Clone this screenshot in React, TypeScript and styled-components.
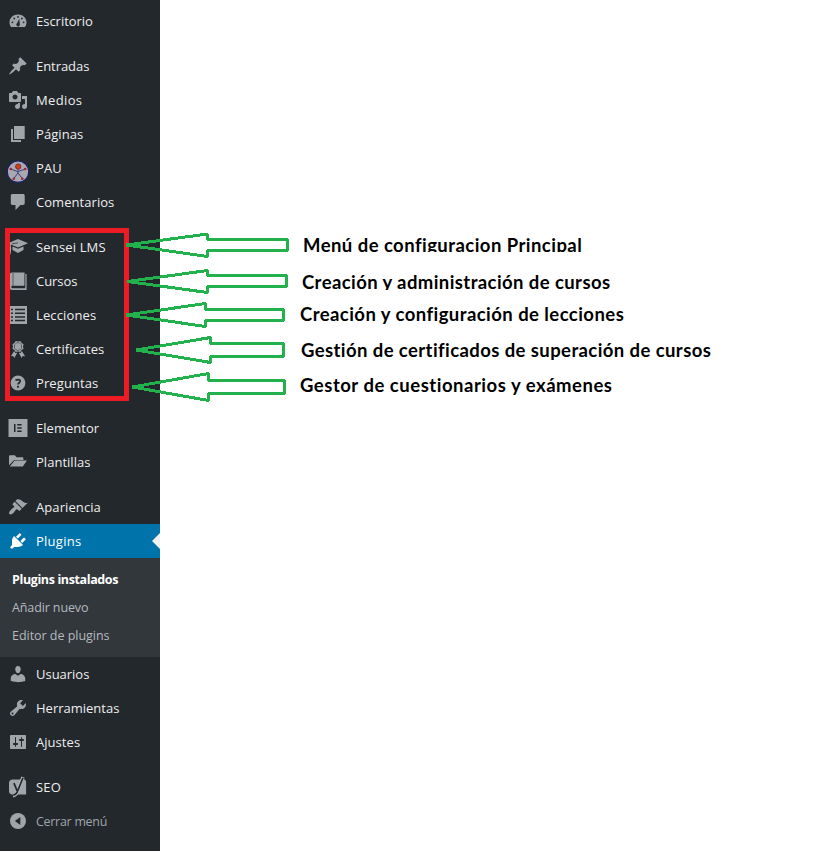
import React from "react";
import styled, { createGlobalStyle, css } from "styled-components";

const GlobalStyle = createGlobalStyle`
  body {
    margin: 0;
    background: #fff;
  }
`;

const Page = styled.div`
  position: relative;
  display: flex;
  align-items: flex-start;
  width: 818px;
  height: 868px;
  overflow: hidden;
  font-family: "Open Sans", "Noto Sans", sans-serif;
`;

const Sidebar = styled.nav`
  display: flex;
  flex-direction: column;
  gap: 11px;
  box-sizing: border-box;
  width: 160px;
  height: 851px;
  padding-top: 4px;
  background: #23282d;
`;

const MenuGroup = styled.div`
  display: flex;
  flex-direction: column;
`;

const MenuRow = styled.a<{ $active?: boolean; $muted?: boolean }>`
  position: relative;
  display: flex;
  align-items: center;
  gap: 8px;
  height: 34px;
  padding-left: 8px;
  color: #eee;
  font-size: 13px;
  line-height: 18px;
  white-space: nowrap;

  ${(p) =>
    p.$muted &&
    css`
      color: #a0a5aa;
      font-size: 12.4px;
      line-height: 20px;

      span {
        padding-top: 2px;
      }
    `}

  ${(p) =>
    p.$active &&
    css`
      background: #0073aa;
      color: #fff;

      &::after {
        content: "";
        position: absolute;
        right: 0;
        top: 9px;
        border: 8px solid transparent;
        border-left-width: 0;
        border-right-color: #f1f1f1;
      }
    `}
`;

const IconBox = styled.svg<{ $active?: boolean }>`
  flex: none;
  width: 20px;
  height: 20px;
  overflow: visible;
  fill: ${(p) => (p.$active ? "#fff" : "#a0a5aa")};
`;

const Label = styled.span<{ $spacing: number }>`
  letter-spacing: ${(p) => p.$spacing}px;
`;

const Submenu = styled.div`
  display: flex;
  flex-direction: column;
  box-sizing: border-box;
  height: 99px;
  padding: 8px 12px 7px;
  background: #32373c;
`;

const SubmenuItem = styled.a<{ $current?: boolean }>`
  height: 28px;
  color: ${(p) => (p.$current ? "#fff" : "#b4b9be")};
  font-size: 12.5px;
  font-weight: ${(p) => (p.$current ? 700 : 400)};
  line-height: 28px;
  white-space: nowrap;
`;

const Annotations = styled.div`
  position: absolute;
  inset: 0;
  pointer-events: none;
`;

const Highlight = styled.div`
  position: absolute;
  left: 5px;
  top: 228px;
  box-sizing: border-box;
  width: 124px;
  height: 173px;
  border: 5px solid #ed1c24;
`;

const Arrows = styled.svg`
  position: absolute;
  left: 0;
  top: 0;
  fill: none;
  stroke: #22b14c;
  stroke-width: 3;
  shape-rendering: crispEdges;
`;

const Note = styled.div<{ $x: number; $y: number; $h: number; $spacing: number }>`
  position: absolute;
  left: ${(p) => p.$x}px;
  top: ${(p) => p.$y}px;
  height: ${(p) => p.$h}px;
  overflow: hidden;
  color: #000;
  font: 700 18.5px/24px Lato, "Open Sans", sans-serif;
  letter-spacing: ${(p) => p.$spacing}px;
  white-space: nowrap;
`;

const bg = "#23282d";

const icons: Record<string, React.ReactNode> = {
  dashboard: (
    <g transform="translate(0 -.5)">
      <path d="M3.200 16.600h13.600c1-1.300 1.700-2.900 1.700-4.700C18.500 7.300 14.700 4 10 4S1.500 7.300 1.500 11.900c0 1.800.7 3.400 1.700 4.700z" />
      <g fill={bg}>
        <circle cx="10" cy="6.400" r=".9" />
        <circle cx="6.200" cy="8" r=".9" />
        <circle cx="4.400" cy="11.800" r=".9" />
        <circle cx="15.600" cy="11.800" r=".9" />
        <circle cx="13.900" cy="8" r=".9" />
        <path d="M11.200 8.300l.6 5a1.800 1.800 0 1 1-2.600-.8z" />
      </g>
    </g>
  ),
  pin: (
    <path d="M10.440 3.020l1.820-1.820 6.360 6.350-1.830 1.820c-1.050-.68-2.480-.57-3.410.36l-.75.75c-.92.93-1.040 2.350-.35 3.410l-1.830 1.820-2.410-2.410-2.800 2.790c-.42.42-3.380 2.710-3.800 2.290s1.860-3.390 2.280-3.810l2.790-2.790L4.100 9.360l1.830-1.820c1.050.69 2.480.57 3.400-.36l.75-.75c.93-.92 1.050-2.350.36-3.410z" />
  ),
  media: (
    <path
      fillRule="evenodd"
      d="M13 11V4c0-.55-.45-1-1-1h-1.670L9 1H5L3.670 3H2c-.55 0-1 .45-1 1v7c0 .55.45 1 1 1h10c.55 0 1-.45 1-1zM7 4.500c1.380 0 2.500 1.120 2.500 2.500S8.380 9.500 7 9.500 4.500 8.380 4.500 7 5.620 4.500 7 4.500zM14 6h5v10.500c0 1.380-1.120 2.500-2.500 2.500S14 17.880 14 16.500s1.120-2.500 2.500-2.500c.17 0 .34.02.5.05V9h-3V6zm-4 8.050V13h2v3.500c0 1.380-1.120 2.500-2.500 2.500S7 17.880 7 16.500 8.120 14 9.500 14c.17 0 .34.02.5.05z"
    />
  ),
  page: <path d="M6 15V2h10.700v13H6zm-1 1h8v2H3V5h2v11z" />,
  pau: (
    <g transform="translate(0 3.700)">
      <circle cx="10" cy="10" r="10.700" fill="#a8a9b0" stroke="#19206b" strokeWidth="1.100" />
      <path d="M2.800 7.400l7 2.500 7.400-2.500M10 8v3.200l-4.200 5.600M10 11.200l4.300 5.600" fill="none" stroke="#39407f" strokeWidth="1" />
      <circle cx="10.200" cy="4.900" r="2.700" fill="#d33a12" stroke="#6b2442" strokeWidth=".8" />
      <g fill="#a02338">
        <circle cx="2.800" cy="7.300" r="1.300" />
        <circle cx="17.200" cy="7.300" r="1.300" />
        <circle cx="5.800" cy="17" r="1.300" />
        <circle cx="14.300" cy="17" r="1.300" />
      </g>
    </g>
  ),
  comment: <path d="M4.500 2h10.500c1 0 1.700.7 1.700 1.700v7.600c0 1-.7 1.700-1.700 1.700h-2.500l-5 5v-5h-3c-1 0-1.700-.7-1.700-1.700V3.700c0-1 .7-1.700 1.700-1.700z" />,
  sensei: (
    <>
      <path d="M10 2l10 4.200-10 4.300-7.200-3V9.200c.8 1.800.2 5.800-.6 8.800H.6c.3-3.400.5-7.800.9-9.600L.6 6z" />
      <path d="M4.500 9.600l5.500 2.200 5.500-2.200v3.500l-5.500 2.900-5.500-2.900z" />
      <path d="M10 5.800l-6 1" stroke={bg} strokeWidth=".7" fill="none" />
    </>
  ),
  book: (
    <>
      <path d="M4 1.500h12.600v13.300H4.500a1.200 1.200 0 0 0 0 2.400h12.600V3h1.500v16H4.500A3.200 3.200 0 0 1 1.300 16V4.200c0-1.700 1.200-2.700 2.700-2.700z" />
      <path d="M5 2v12.800" stroke={bg} strokeWidth=".6" />
      <path d="M17 3v13.500" stroke={bg} strokeWidth=".5" />
    </>
  ),
  list: (
    <>
      <path d="M1 1h18v18H1z" />
      <path
        d="M3 4.500h2m2 0h10M3 8.200h2m2 0h10M3 11.900h2m2 0h10M3 15.600h2m2 0h10"
        stroke={bg}
        strokeWidth="1.500"
      />
    </>
  ),
  award: (
    <path
      fillRule="evenodd"
      d="M4.460 5.160L5 7.460l-.54 2.290 2.010 1.240L7.700 13l2.300-.54 2.300.54 1.230-2.010 2.010-1.240L15 7.460l.54-2.300-2-1.240-1.240-2.010-2.300.55-2.290-.54-1.250 2zm5.550 6.340c-2.210 0-4-1.790-4-4 0-2.200 1.790-4 4-4s4 1.800 4 4c0 2.210-1.790 4-4 4zm0-.6a3.400 3.400 0 1 0 0-6.800 3.400 3.400 0 0 0 0 6.800zM13.900 11.900l3.200 5.300-2.300-.2-1.100 2-3-5.300 1.900.4zM6.100 11.900l-3.200 5.300 2.300-.2 1.100 2 3-5.300-1.900.4z"
    />
  ),
  help: (
    <>
      <circle cx="10" cy="10" r="7.400" />
      <path d="M7.500 7.400c1-1 4.700-1.500 4.700.7 0 1.600-2.200 1.700-2.200 3.500" fill="none" stroke={bg} strokeWidth="1.700" />
      <circle cx="10" cy="13.800" r="1.100" fill={bg} />
    </>
  ),
  elementor: (
    <>
      <path d="M.5 1h19v18H.5z" />
      <path d="M6 6h1.500v8H6zM9.200 6h4.400v1.400H9.200zM9.200 9.300h4.400v1.400H9.200zM9.200 12.600h4.400V14H9.200z" fill={bg} />
    </>
  ),
  folder: (
    <path d="M1 13.200V4.500c0-.7.500-1.200 1.200-1.200h4.600l1.800 1.900h5.600c.7 0 1.200.5 1.200 1.100v1.700H6.200zM6.700 8.600h12.300l-4.200 6H1.800z" />
  ),
  appearance: (
    <path d="M14.480 11.060L7.410 3.990l1.500-1.500c.5-.56 2.300-.47 3.510.32 1.210.8 1.430 1.280 2.910 2.100 1.180.64 2.450 1.260 4.450.85zm-.71.710L6.700 4.700 4.930 6.470c-.39.39-.39 1.020 0 1.410l1.060 1.060c.39.39.39 1.030 0 1.420-.6.6-1.430 1.110-2.210 1.690-.35.26-.7.53-1.010.84C1.430 14.230.4 16.080 1.400 17.070c.99 1 2.840-.03 4.180-1.360.31-.31.58-.66.85-1.020.57-.78 1.080-1.610 1.690-2.210.39-.39 1.020-.39 1.410 0l1.060 1.060c.39.39 1.020.39 1.410 0z" />
  ),
  plugin: (
    <path d="M13.110 4.360L9.870 7.600 8 5.730l3.240-3.240c.35-.34 1.050-.2 1.560.32.52.51.66 1.210.31 1.550zm-8 1.770l.91-1.120 9.010 9.010-1.190.84c-.71.71-2.630 1.160-3.820 1.160H6.140L4.900 17.260c-.59.59-1.540.59-2.120 0-.59-.58-.59-1.530 0-2.120l1.240-1.240v-3.880c0-1.130.4-3.190 1.090-3.890zm7.260 3.970l3.240-3.240c.34-.35 1.040-.21 1.550.31.52.51.66 1.210.31 1.550l-3.240 3.250z" />
  ),
  user: (
    <path d="M10 9.250c-2.270 0-2.730-3.440-2.730-3.440C7 4.020 7.820 2 9.970 2c2.160 0 2.980 2.020 2.710 3.810 0 0-.41 3.440-2.680 3.440zm0 2.570L12.720 10c2.390 0 4.520 2.330 4.520 4.530v2.490s-3.650 1.130-7.240 1.130c-3.650 0-7.240-1.130-7.240-1.130v-2.490c0-2.250 1.940-4.480 4.470-4.480z" />
  ),
  tools: (
    <path d="M16.680 9.770c-1.340 1.340-3.300 1.670-4.950.99l-5.410 6.520c-.99.99-2.590.99-3.580 0s-.99-2.590 0-3.570l6.520-5.420c-.68-1.650-.35-3.610.99-4.950 1.280-1.280 3.120-1.620 4.720-1.060l-2.890 2.890 2.820 2.820 2.860-2.870c.53 1.580.18 3.390-1.080 4.650zM3.810 16.210c.4.39 1.040.39 1.430 0 .4-.4.4-1.040 0-1.430-.39-.4-1.030-.4-1.430 0-.39.39-.39 1.030 0 1.430z" />
  ),
  settings: (
    <path d="M18 16V4c0-.55-.45-1-1-1H3c-.55 0-1 .45-1 1v12c0 .55.45 1 1 1h14c.55 0 1-.45 1-1zM8 11h1c.55 0 1 .45 1 1s-.45 1-1 1H8v1.500c0 .28-.22.5-.5.5s-.5-.22-.5-.5V13H6c-.55 0-1-.45-1-1s.45-1 1-1h1V5.500c0-.28.22-.5.5-.5s.5.22.5.5V11zm5-2h-1c-.55 0-1-.45-1-1s.45-1 1-1h1V5.500c0-.28.22-.5.5-.5s.5.22.5.5V7h1c.55 0 1 .45 1 1s-.45 1-1 1h-1v5.500c0 .28-.22.5-.5.5s-.5-.22-.5-.5V9z" />
  ),
  seo: (
    <>
      <path d="M4.500 2.500h12c1 .5 1.600 1.500 1.600 2.700v12.300H4.200C2.300 17.500 1 16.200 1 14.300V6c0-2 1.500-3.500 3.500-3.500z" />
      <path d="M15 .2L9.800 13.600c-.8 2.700-2 4.900-4.800 5.100" fill="none" stroke="#b4b9be" strokeWidth="3.400" />
      <path d="M5.900 6.200l3.300 7.600M15 .8L9.800 13.600c-.8 2.500-2 4.300-4.600 4.500" fill="none" stroke={bg} strokeWidth="1.700" />
    </>
  ),
  collapse: (
    <>
      <circle cx="10" cy="10" r="8" />
      <path d="M12.300 6v8L6.800 10z" fill={bg} />
    </>
  ),
};

type Item = { icon: string; text: string; spacing: number; active?: boolean; muted?: boolean };

const groups: Item[][] = [
  [{ icon: "dashboard", text: "Escritorio", spacing: -0.02 }],
  [
    { icon: "pin", text: "Entradas", spacing: -0.05 },
    { icon: "media", text: "Medios", spacing: 0.35 },
    { icon: "page", text: "Páginas", spacing: 0.08 },
    { icon: "pau", text: "PAU", spacing: 0.1 },
    { icon: "comment", text: "Comentarios", spacing: 0.05 },
  ],
  [
    { icon: "sensei", text: "Sensei LMS", spacing: 0.16 },
    { icon: "book", text: "Cursos", spacing: -0.05 },
    { icon: "list", text: "Lecciones", spacing: 0.13 },
    { icon: "award", text: "Certificates", spacing: 0.02 },
    { icon: "help", text: "Preguntas", spacing: 0.1 },
  ],
  [
    { icon: "elementor", text: "Elementor", spacing: 0.03 },
    { icon: "folder", text: "Plantillas", spacing: 0.02 },
  ],
  [
    { icon: "appearance", text: "Apariencia", spacing: 0.09 },
    { icon: "plugin", text: "Plugins", spacing: 0.25, active: true },
    { icon: "user", text: "Usuarios", spacing: -0.02 },
    { icon: "tools", text: "Herramientas", spacing: 0 },
    { icon: "settings", text: "Ajustes", spacing: 0.05 },
  ],
  [
    { icon: "seo", text: "SEO", spacing: 0.2 },
    { icon: "collapse", text: "Cerrar menú", spacing: -0.24, muted: true },
  ],
];

const submenu = [
  { text: "Plugins instalados", spacing: -0.38, current: true },
  { text: "Añadir nuevo", spacing: -0.12 },
  { text: "Editor de plugins", spacing: -0.03 },
];

const arrows = [
  "126.5,245 207.5,234 207.5,239.5 287.5,239.5 287.5,250.5 207.5,250.5 207.5,256.5",
  "127.5,281.5 207.5,270.5 207.5,275.5 286.5,275.5 286.5,286.5 207.5,286.5 207.5,292.5",
  "126.5,315 205.5,303.5 205.5,309.5 283.5,309.5 283.5,320.5 205.5,320.5 205.5,326.5",
  "136.5,350 210.5,337.5 210.5,343.5 283.5,343.5 283.5,356.5 210.5,356.5 210.5,362.5",
  "132.5,387 208.5,373.5 208.5,380.5 284.5,380.5 284.5,393.5 208.5,393.5 208.5,400.5",
];

const notes = [
  { text: "Menú de configuracion Principal", x: 303, y: 233, h: 19, spacing: 0.45 },
  { text: "Creación y administración de cursos", x: 302, y: 270, h: 20, spacing: 0.41 },
  { text: "Creación y configuración de lecciones", x: 300, y: 302, h: 26, spacing: 0.44 },
  { text: "Gestión de certificados de superación de cursos", x: 301, y: 338, h: 26, spacing: 0.41 },
  { text: "Gestor de cuestionarios y exámenes", x: 300, y: 373, h: 26, spacing: 0.52 },
];

export default function App() {
  return (
    <Page>
      <GlobalStyle />
      <Sidebar>
        {groups.map((items, index) => (
          <MenuGroup key={index}>
            {items.map((item) => (
              <React.Fragment key={item.text}>
                <MenuRow $active={item.active} $muted={item.muted}>
                  <IconBox viewBox="0 0 20 20" $active={item.active}>
                    {icons[item.icon]}
                  </IconBox>
                  <Label $spacing={item.spacing}>{item.text}</Label>
                </MenuRow>
                {item.active && (
                  <Submenu>
                    {submenu.map((sub) => (
                      <SubmenuItem key={sub.text} $current={sub.current}>
                        <Label $spacing={sub.spacing}>{sub.text}</Label>
                      </SubmenuItem>
                    ))}
                  </Submenu>
                )}
              </React.Fragment>
            ))}
          </MenuGroup>
        ))}
      </Sidebar>
      <Annotations>
        <Highlight />
        <Arrows width="818" height="868">
          {arrows.map((points) => (
            <polygon key={points} points={points} strokeLinejoin="bevel" />
          ))}
        </Arrows>
        {notes.map((note) => (
          <Note key={note.text} $x={note.x} $y={note.y} $h={note.h} $spacing={note.spacing}>
            {note.text}
          </Note>
        ))}
      </Annotations>
    </Page>
  );
}
